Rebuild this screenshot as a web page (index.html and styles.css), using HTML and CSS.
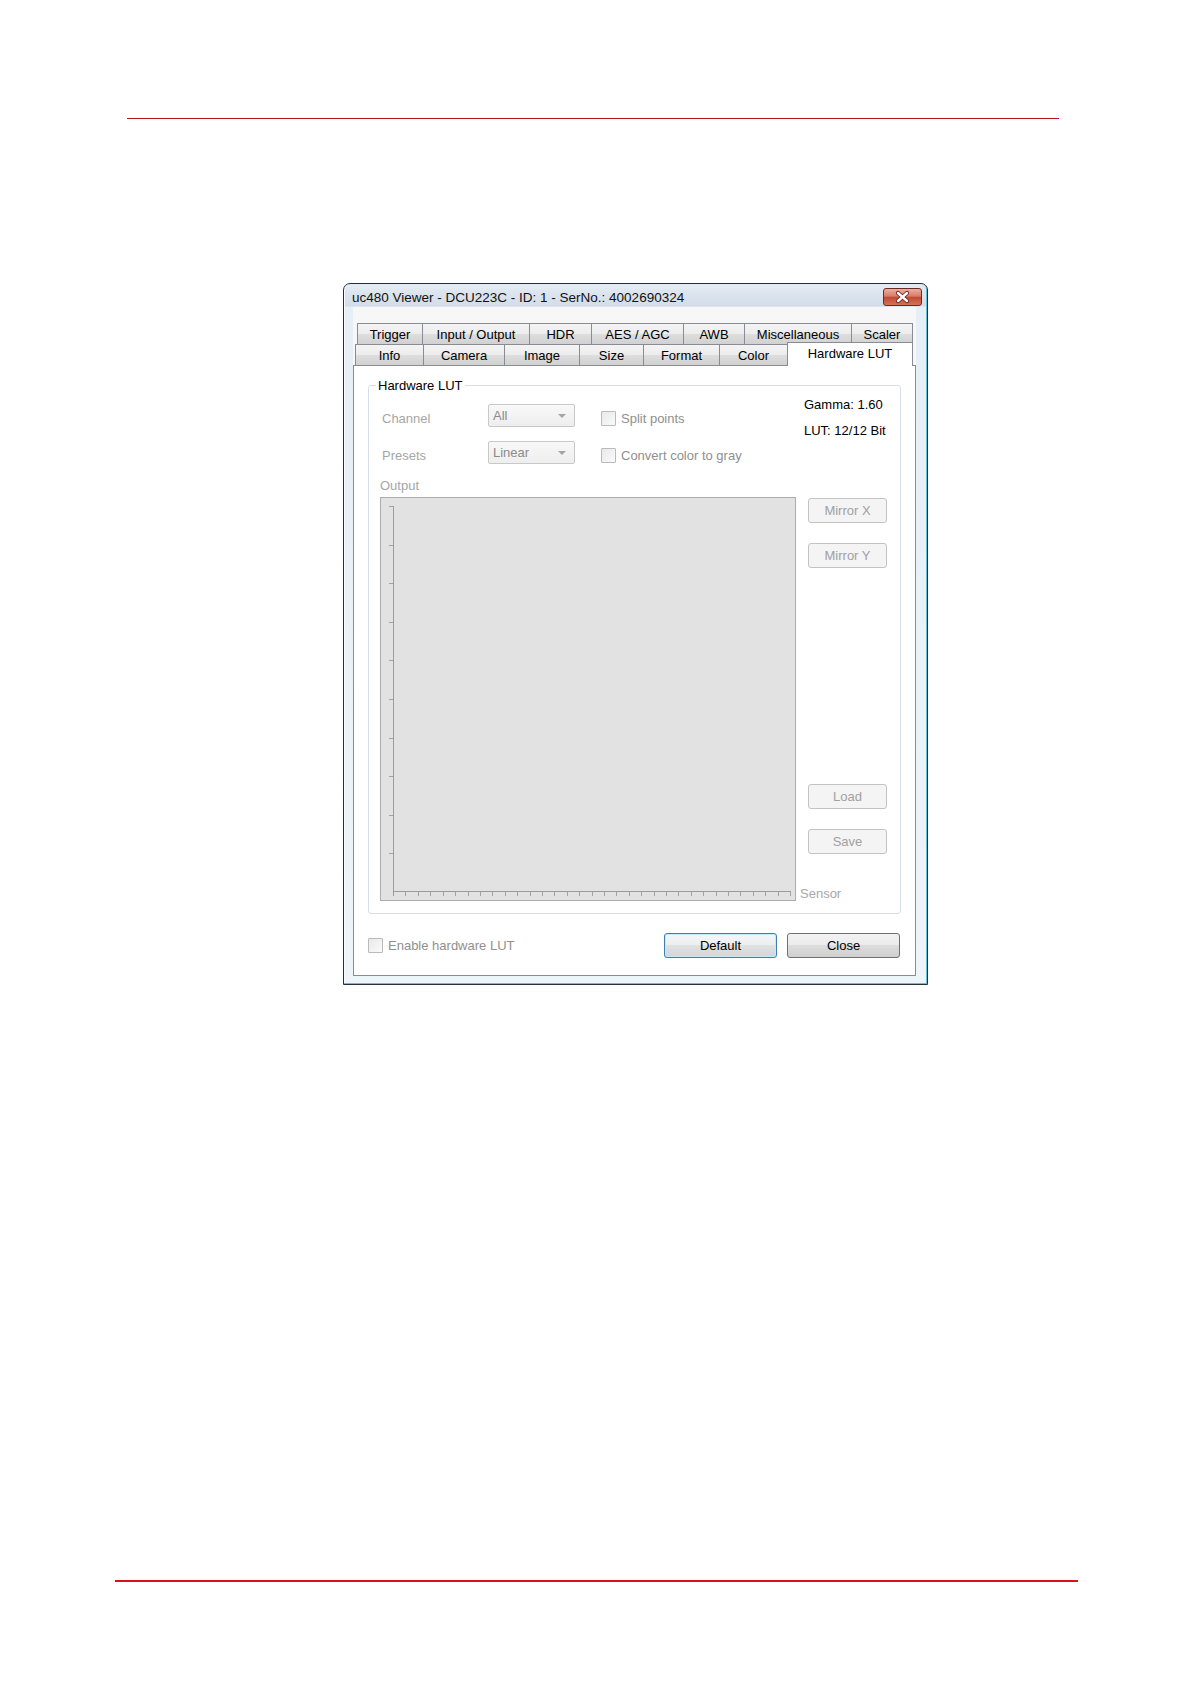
FILE: index.html
```html
<!DOCTYPE html>
<html lang="en">
<head>
<meta charset="utf-8">
<title>uc480 Viewer - Hardware LUT</title>
<link rel="stylesheet" href="styles.css">
</head>
<body>
<div class="page">
  <div class="rule-top"></div>

  <div class="window">
    <div class="titlebar">
      <span class="title">uc480 Viewer - DCU223C - ID: 1 - SerNo.: 4002690324</span>
      <div class="close-btn">
        <svg width="37" height="16" viewBox="0 0 37 16">
          <path d="M14 4 L23 12 M23 4 L14 12" stroke="#6a241c" stroke-width="4.2" stroke-linecap="round" fill="none"/>
          <path d="M14 4 L23 12 M23 4 L14 12" stroke="#ffffff" stroke-width="2.4" stroke-linecap="round" fill="none"/>
        </svg>
      </div>
    </div>

    <div class="client">
      <div class="tabrow row1">
        <div class="tab t-trigger">Trigger</div>
        <div class="tab t-io">Input / Output</div>
        <div class="tab t-hdr">HDR</div>
        <div class="tab t-aes">AES / AGC</div>
        <div class="tab t-awb">AWB</div>
        <div class="tab t-misc">Miscellaneous</div>
        <div class="tab t-scaler">Scaler</div>
      </div>
      <div class="tabrow row2">
        <div class="tab t-info">Info</div>
        <div class="tab t-camera">Camera</div>
        <div class="tab t-image">Image</div>
        <div class="tab t-size">Size</div>
        <div class="tab t-format">Format</div>
        <div class="tab t-color">Color</div>
        <div class="tab t-lut selected">Hardware LUT</div>
      </div>

      <div class="panel">
        <div class="group">
          <div class="group-title">Hardware LUT</div>

          <div class="controls">
            <div class="ctl-grid">
              <span class="lbl row-lbl">Channel</span>
              <div class="combo"><span>All</span><i class="arrow"></i></div>
              <div class="chk row-chk"><span class="box"></span>Split points</div>

              <span class="lbl row-lbl">Presets</span>
              <div class="combo"><span>Linear</span><i class="arrow"></i></div>
              <div class="chk row-chk"><span class="box"></span>Convert color to gray</div>
            </div>
            <div class="info">
              <div>Gamma: 1.60</div>
              <div>LUT: 12/12 Bit</div>
            </div>
          </div>

          <div class="lbl out-lbl">Output</div>

          <div class="graph-row">
            <div class="graph">
              <svg class="axes" width="414" height="402" viewBox="0 0 414 402">
                <path d="M12.5 8 V398 M12 393.5 H410" stroke="#9c9c9c" stroke-width="1" fill="none"/>
                <path d="M8 8.5 H12 M8 47.5 H12 M8 85.5 H12 M8 124.5 H12 M8 162.5 H12 M8 201.5 H12 M8 240.5 H12 M8 278.5 H12 M8 317.5 H12 M8 355.5 H12" stroke="#a3a3a3" stroke-width="1" fill="none"/>
                <path d="M24.5 394 V398 M37.5 394 V398 M49.5 394 V398 M62.5 394 V398 M74.5 394 V398 M87.5 394 V398 M99.5 394 V398 M111.5 394 V398 M124.5 394 V398 M136.5 394 V398 M149.5 394 V398 M161.5 394 V398 M173.5 394 V398 M186.5 394 V398 M198.5 394 V398 M211.5 394 V398 M223.5 394 V398 M235.5 394 V398 M248.5 394 V398 M260.5 394 V398 M273.5 394 V398 M285.5 394 V398 M297.5 394 V398 M310.5 394 V398 M322.5 394 V398 M335.5 394 V398 M347.5 394 V398 M359.5 394 V398 M372.5 394 V398 M384.5 394 V398 M397.5 394 V398 M409.5 394 V398" stroke="#a3a3a3" stroke-width="1" fill="none"/>
              </svg>
            </div>
            <div class="side">
              <div class="sbtn first">Mirror X</div>
              <div class="sbtn gap">Mirror Y</div>
              <div class="spacer"></div>
              <div class="sbtn">Load</div>
              <div class="sbtn gap">Save</div>
              <div class="sensor">Sensor</div>
            </div>
          </div>
        </div>

        <div class="bottom">
          <div class="chk enable"><span class="box"></span>Enable hardware LUT</div>
          <div class="btn default">Default</div>
          <div class="btn close">Close</div>
        </div>
      </div>
    </div>
  </div>

  <div class="rule-bottom"></div>
</div>
</body>
</html>
```

FILE: styles.css
```css
html, body {
  margin: 0;
  padding: 0;
  background: #ffffff;
}

body {
  font-family: "Liberation Sans", Arial, sans-serif;
  font-size: 13px;
  color: #000000;
}

.page {
  width: 1190px;
  min-height: 1684px;
  padding-top: 118px;
  box-sizing: border-box;
  overflow: hidden;
}

.rule-top {
  margin-left: 127px;
  width: 932px;
  height: 1px;
  background: #b3141c;
}

.rule-bottom {
  margin: 595px 0 0 115px;
  width: 963px;
  height: 2px;
  background: #d8121a;
}

/* ---------- window frame ---------- */
.window {
  margin: 164px 0 0 343px;
  width: 585px;
  height: 702px;
  box-sizing: border-box;
  border: 1px solid #26303b;
  border-radius: 7px 7px 0 0;
  background: linear-gradient(to bottom, #e4ebf3 0px, #d2dde9 22px, #e6eef6 23px, #eef4f9 100%);
  box-shadow: inset -1px -1px 0 #62c1d8, inset 1px 0 0 #f7fbff;
  display: flex;
  flex-direction: column;
  overflow: hidden;
}

.titlebar {
  flex: none;
  height: 23px;
  display: flex;
  align-items: flex-start;
  padding: 0 5px 0 8px;
}

.title {
  margin-top: 6px;
  font-size: 13.5px;
  line-height: 15px;
  color: #111111;
  white-space: nowrap;
}

.close-btn {
  margin-left: auto;
  margin-top: 4px;
  width: 39px;
  height: 18px;
  box-sizing: border-box;
  border: 1px solid #6e2a22;
  border-radius: 3px;
  background: linear-gradient(to bottom, #eab0a3 0%, #d77c68 45%, #c24a33 52%, #d3735a 100%);
  display: flex;
  align-items: center;
  justify-content: center;
}

.close-btn svg {
  display: block;
}

/* ---------- client / tabs ---------- */
.client {
  flex: 1;
  margin: 0 11px 8px 9px;
  padding-top: 16px;
  background: #f7f7f7;
  display: flex;
  flex-direction: column;
}

.tabrow {
  flex: none;
  display: flex;
  height: 21px;
}

.row1 { margin-left: 4px; }
.row2 { margin-left: 2px; }

.tab {
  box-sizing: border-box;
  height: 21px;
  margin-left: -1px;
  border: 1px solid #898c95;
  border-bottom: none;
  background: linear-gradient(to bottom, #f4f4f4 0%, #ececec 50%, #dedede 50%, #d1d1d1 100%);
  display: flex;
  align-items: center;
  justify-content: center;
  line-height: 15px;
  white-space: nowrap;
}

.tab:first-child { margin-left: 0; }

.t-trigger { width: 66px; }
.t-io { width: 108px; }
.t-hdr { width: 63px; }
.t-aes { width: 93px; }
.t-awb { width: 62px; }
.t-misc { width: 108px; }
.t-scaler { width: 62px; }

.t-info { width: 69px; }
.t-camera { width: 82px; }
.t-image { width: 76px; }
.t-size { width: 65px; }
.t-format { width: 77px; }
.t-color { width: 69px; }

.tab.selected {
  position: relative;
  z-index: 1;
  width: 126px;
  height: 24px;
  margin-top: -2px;
  background: #ffffff;
  align-items: flex-start;
  padding-top: 3px;
}

/* ---------- tab page ---------- */
.panel {
  flex: 1;
  border: 1px solid #898c95;
  background: #ffffff;
  padding: 0 14px 0 14px;
  display: flex;
  flex-direction: column;
}

.group {
  margin-top: 19px;
  border: 1px solid #d5dfe5;
  border-radius: 3px;
  padding: 0 11px 12px 11px;
}

.group-title {
  width: max-content;
  margin: -8px 0 0 -4px;
  padding: 0 2px;
  background: #ffffff;
  line-height: 15px;
  color: #000000;
}

.controls {
  display: flex;
}

.ctl-grid {
  display: grid;
  grid-template-columns: 106px 87px auto;
  grid-auto-rows: 23px;
  row-gap: 14px;
  align-items: center;
  padding-top: 11px;
  padding-left: 2px;
}

.lbl {
  color: #a6a6a6;
  line-height: 15px;
}

.row-lbl {
  margin-top: 6px;
}

.combo {
  height: 23px;
  box-sizing: border-box;
  border: 1px solid #c8c8c8;
  border-radius: 2px;
  background: linear-gradient(to bottom, #f8f8f8, #eeeeee);
  display: flex;
  align-items: center;
  padding-left: 4px;
  color: #8a8a8a;
  line-height: 15px;
}

.arrow {
  margin-left: auto;
  margin-right: 8px;
  width: 0;
  height: 0;
  border-left: 4px solid transparent;
  border-right: 4px solid transparent;
  border-top: 4px solid #a5a5a5;
}

.chk {
  margin-left: 26px;
  display: flex;
  align-items: center;
  color: #8f8f8f;
  line-height: 15px;
  white-space: nowrap;
}

.row-chk {
  margin-top: 5px;
}

.row-chk .box {
  margin-right: 5px;
}

.box {
  flex: none;
  width: 15px;
  height: 15px;
  box-sizing: border-box;
  border: 1px solid #bababa;
  border-radius: 1px;
  background: linear-gradient(135deg, #e9e9e9, #fafafa);
  margin-right: 7px;
}

.info {
  margin-left: auto;
  margin-top: -1px;
  width: 85px;
  line-height: 26px;
  white-space: nowrap;
  color: #000000;
}

.out-lbl {
  margin-top: 14px;
}

.graph-row {
  display: flex;
  margin-top: 4px;
}

.graph {
  flex: none;
  width: 416px;
  height: 404px;
  box-sizing: border-box;
  border: 1px solid #ababab;
  background: #e2e2e2;
}

.axes {
  display: block;
}

.side {
  width: 90px;
  margin-left: 1px;
  display: flex;
  flex-direction: column;
}

.sbtn {
  flex: none;
  width: 79px;
  height: 25px;
  margin-left: 11px;
  box-sizing: border-box;
  border: 1px solid #c3c3c3;
  border-radius: 3px;
  background: #f4f4f4;
  color: #a0a0a0;
  display: flex;
  align-items: center;
  justify-content: center;
  line-height: 15px;
}

.sbtn.first { margin-top: 1px; }
.sbtn.gap { margin-top: 20px; }

.spacer { flex: 1; }

.sensor {
  margin-top: 32px;
  padding-left: 3px;
  line-height: 15px;
  color: #a8a8a8;
}

/* ---------- bottom row ---------- */
.bottom {
  display: flex;
  align-items: center;
  height: 25px;
  margin-top: 19px;
  margin-right: 1px;
}

.chk.enable {
  margin-left: 0;
}

.chk.enable .box {
  margin-right: 5px;
}

.btn {
  flex: none;
  width: 113px;
  height: 25px;
  box-sizing: border-box;
  border: 1px solid #707070;
  border-radius: 3px;
  background: linear-gradient(to bottom, #f2f2f2 0%, #ebebeb 50%, #dddddd 50%, #cfcfcf 100%);
  display: flex;
  align-items: center;
  justify-content: center;
  line-height: 15px;
  color: #000000;
}

.btn.default {
  margin-left: auto;
  border-color: #3c7fb1;
  box-shadow: inset 0 0 0 1px #c4e9f8;
  background: linear-gradient(to bottom, #f3f5f7 0%, #eceef0 50%, #dfe1e3 50%, #d3d5d8 100%);
}

.btn.close {
  margin-left: 10px;
}
```
